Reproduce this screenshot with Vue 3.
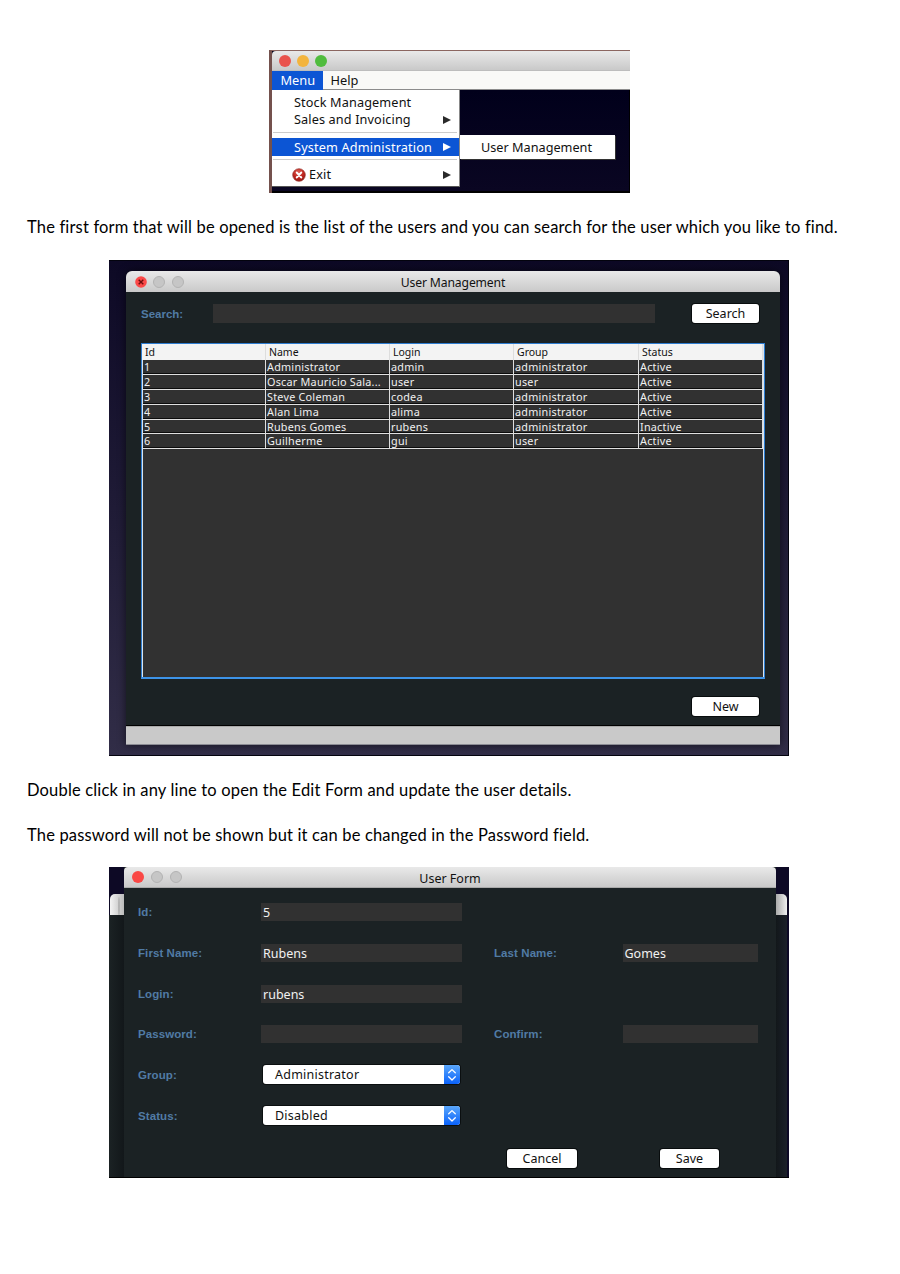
<script setup>
const columns = ['Id', 'Name', 'Login', 'Group', 'Status']
const users = [
  ['1', 'Administrator', 'admin', 'administrator', 'Active'],
  ['2', 'Oscar Mauricio Sala...', 'user', 'user', 'Active'],
  ['3', 'Steve Coleman', 'codea', 'administrator', 'Active'],
  ['4', 'Alan Lima', 'alima', 'administrator', 'Active'],
  ['5', 'Rubens Gomes', 'rubens', 'administrator', 'Inactive'],
  ['6', 'Guilherme', 'gui', 'user', 'Active'],
]
const fields = [
  { label: 'Id:', value: '5' },
  { label: 'First Name:', value: 'Rubens', label2: 'Last Name:', value2: 'Gomes' },
  { label: 'Login:', value: 'rubens' },
  { label: 'Password:', value: '', label2: 'Confirm:', value2: '' },
  { label: 'Group:', value: 'Administrator', select: true },
  { label: 'Status:', value: 'Disabled', select: true },
]
</script>

<template>
  <main class="page">
    <section class="menu-shot">
      <div class="titlebar small">
        <i class="light red"></i><i class="light amber"></i><i class="light green"></i>
      </div>
      <nav class="menubar"><span class="open">Menu</span><span class="help">Help</span></nav>
      <div class="desk">
        <div class="dropdown">
          <div class="item stock"><span>Stock Management</span></div>
          <div class="item sales"><span>Sales and Invoicing</span><svg class="arrow" viewBox="0 0 8 8"><path d="M0 0L8 4L0 8Z" /></svg></div>
          <hr />
          <div class="item active"><span>System Administration</span><svg class="arrow" viewBox="0 0 8 8"><path d="M0 0L8 4L0 8Z" /></svg></div>
          <hr class="second" />
          <div class="item exit">
            <svg class="exit-icon" viewBox="0 0 14 14">
              <defs>
                <radialGradient id="exitRed" cx=".45" cy=".3" r=".75">
                  <stop offset="0" stop-color="#e0675c" /><stop offset=".55" stop-color="#c0261f" /><stop offset="1" stop-color="#8c1410" />
                </radialGradient>
              </defs>
              <circle cx="7" cy="7" r="6.3" fill="url(#exitRed)" stroke="#9a3a33" stroke-width=".7" />
              <path d="M4.8 4.6L9.2 9.4M9.2 4.6L4.8 9.4" stroke="#fff" stroke-width="2.1" stroke-linecap="round" />
            </svg>
            <span>Exit</span><svg class="arrow" viewBox="0 0 8 8"><path d="M0 0L8 4L0 8Z" /></svg>
          </div>
        </div>
        <div class="submenu"><span>User Management</span></div>
      </div>
    </section>

    <p class="intro">The first form that will be opened is the list of the users and you can search for the user which you like to find.</p>

    <section class="list-shot">
      <div class="window">
        <div class="titlebar list-title">
          <svg class="close" viewBox="0 0 12 12"><circle cx="6" cy="6" r="5.8" fill="#fb4948" /><path d="M3.7 3.7L8.3 8.3M8.3 3.7L3.7 8.3" stroke="#6f0d0d" stroke-width="1.4" /></svg>
          <i class="light off"></i><i class="light off"></i>
          <h2>User Management</h2>
        </div>
        <div class="search-row">
          <label>Search:</label>
          <div class="input"></div>
          <button>Search</button>
        </div>
        <div class="table">
          <div class="tr head"><span v-for="c in columns" :key="c">{{ c }}</span></div>
          <div v-for="u in users" :key="u[0]" class="tr"><span v-for="(v, i) in u" :key="i"><b>{{ v }}</b></span></div>
        </div>
        <div class="new-row"><button>New</button></div>
        <div class="statusbar"></div>
      </div>
    </section>

    <p class="edit">Double click in any line to open the Edit Form and update the user details.</p>
    <p class="pass">The password will not be shown but it can be changed in the Password field.</p>

    <section class="form-shot">
      <div class="behind left"><div class="behind-bar"><i class="light off"></i></div><div class="behind-body"></div></div>
      <div class="form-window">
        <div class="titlebar form-title">
          <i class="light red"></i><i class="light off"></i><i class="light off"></i>
          <h2>User Form</h2>
        </div>
        <div class="form">
          <div v-for="f in fields" :key="f.label" class="form-row">
            <label>{{ f.label }}</label>
            <div v-if="f.select" class="select">
              <span>{{ f.value }}</span>
              <svg viewBox="0 0 16 19">
                <defs><linearGradient id="stepBlue" x1="0" y1="0" x2="0" y2="1"><stop offset="0" stop-color="#5aa7fb" /><stop offset="1" stop-color="#0a62fb" /></linearGradient></defs>
                <path d="M0 0H13Q16 0 16 3V16Q16 19 13 19H0Z" fill="url(#stepBlue)" />
                <path d="M4.7 7.8L8 4.6L11.3 7.8M4.7 11.8L8 15L11.3 11.8" fill="none" stroke="#fff" stroke-width="1.3" stroke-linecap="round" stroke-linejoin="round" />
              </svg>
            </div>
            <div v-else class="input">{{ f.value }}</div>
            <label v-if="f.label2" class="label2">{{ f.label2 }}</label>
            <div v-if="f.label2" class="input">{{ f.value2 }}</div>
          </div>
        </div>
        <div class="actions"><button class="cancel">Cancel</button><button class="save">Save</button></div>
      </div>
      <div class="behind right"><div class="behind-bar"></div><div class="behind-body"></div></div>
    </section>
  </main>
</template>

<style>
body { margin: 0; background: #fff; }
</style>

<style scoped>
* { box-sizing: border-box; }
.page { width: 900px; height: 1274px; padding-top: 50px; background: #fff; display: flex; flex-direction: column; font-family: "Noto Sans", "Open Sans", sans-serif; font-size: 12.5px; color: #111; }
p { margin: 0 0 0 27px; height: 24px; line-height: 24px; font-family: Lato, sans-serif; font-size: 16.5px; letter-spacing: .165px; color: #000; white-space: nowrap; flex: none; }
.intro { margin-top: 22px; }
.edit { margin-top: 22px; }
.pass { margin-top: 21px; }
h2 { position: absolute; inset: 0; margin: 0; text-align: center; font-weight: 400; font-size: 12.5px; line-height: 23px; }
.titlebar { position: relative; display: flex; align-items: center; background: linear-gradient(#e9e9e9, #c9c9c9); flex: none; }
.light { width: 12px; height: 12px; border-radius: 50%; flex: none; }
.red { background: #fa4845; }
.off { background: #c6c6c6; border: 1px solid #b3b3b3; }
.amber { background: #f3b43e; }
.green { background: #50bc3e; }
label { font: bold 11.5px "Liberation Sans", Arial, sans-serif; letter-spacing: .08px; color: #517ba4; }
button { height: 19px; padding: 0; border: 0; border-radius: 3px; background: #fff; box-shadow: 0 0 0 1px #080c0d; font: 12.5px/19px "Noto Sans", sans-serif; color: #111; flex: none; }

.menu-shot { width: 361px; height: 143px; margin-left: 269px; flex: none; border-left: 3px solid #74514d; border-top: 1px solid #8b6660; background: #03021a; display: flex; flex-direction: column; }
.titlebar.small { height: 20px; gap: 6px; padding-left: 7px; border-bottom: 1px solid #bdbdbd; border-radius: 4px 0 0 0; }
.small .red { background: #e9534d; }
.menubar { height: 19px; background: #f9f9f7; display: flex; font-size: 12.8px; line-height: 19px; border-bottom: 1px solid #8c8c8c; flex: none; }
.open { width: 51px; height: 19px; padding-left: 8.5px; background: #0c55d4; color: #fff; }
.help { margin-left: 7.5px; }
.desk { position: relative; flex: 1; border-right: 1px solid #000; border-bottom: 2px solid #000; background: linear-gradient(#01001b, #0a0622); }
.dropdown { width: 188px; height: 97px; background: #fff; padding-top: 4px; border-right: 1px solid #888; border-bottom: 1px solid #555; }
.item { display: flex; align-items: center; height: 17px; padding: 0 8px 0 22px; font-size: 12.7px; line-height: 17px; letter-spacing: .12px; white-space: nowrap; }
.arrow { width: 8px; height: 8px; margin-left: auto; fill: #2a2a2a; }
hr { margin: 4px 2px 5px 1px; border: 0; height: 1px; background: #ccc; }
.active { height: 18px; line-height: 18px; background: #0c55d4; color: #fff; letter-spacing: .16px; }
.active .arrow { fill: #fff; }
hr.second { margin: 3px 2px 6px 1px; }
.exit { padding-left: 19.5px; }
.exit-icon { width: 14px; height: 14px; margin-right: 3.5px; }
.submenu { position: absolute; left: 188px; top: 45px; width: 155px; height: 24px; padding-left: 21px; background: #fff; font-size: 12.7px; line-height: 24px; box-shadow: 1px 1px 0 #333; }

.list-shot { width: 680px; height: 496px; margin: 21px 0 0 109px; padding: 10px 9px 0 17px; background: linear-gradient(#0d0925, #312d47); border: 1px solid #03030e; border-left: 0; flex: none; }
.window { width: 654px; height: 474px; border-radius: 6px 6px 0 0; overflow: hidden; background: #1b2224; display: flex; flex-direction: column; box-shadow: 0 0 8px #0009; }
.list-title { height: 21px; gap: 6.5px; padding-left: 8.5px; }
.list-title h2 { font-size: 12.2px; letter-spacing: -.15px; }
.close { width: 12px; height: 12px; }
.search-row { display: flex; align-items: center; height: 19px; margin: 12px 0 0 15px; }
.search-row label { width: 72px; letter-spacing: 0; }
.input { height: 19px; background: #313131; color: #f2f2f2; }
.search-row .input { width: 442px; margin-right: 37px; }
.search-row button, .new-row button { width: 67px; }
.table { width: 624px; height: 336px; margin: 20px 0 0 15px; background: #313131; border: 1px solid #2d7cd0; border-bottom: 2px solid #3d93e8; flex: none; padding-right: 1px; box-shadow: inset 1px 0 0 #d8e4ee, inset -1px 0 0 #d8e4ee; color: #f0f0f0; font-size: 10.8px; }
.tr { display: grid; grid-template-columns: 124px 124px 124px 125px 124px; height: 14.9px; }
.tr:not(.head) { margin-left: 1px; border-bottom: 1px solid #e0e0e0; box-shadow: inset 0 -1px 0 #0c0c0c; grid-template-columns: 123px 124px 124px 125px 124px; letter-spacing: .24px; }
.tr span { padding-left: 1px; line-height: 14px; border-right: 1px solid #dedede; white-space: nowrap; }
.tr b { font-weight: 400; }
.head { height: 16px; background: #f3f3f3; color: #111; font-size: 10.5px; }
.tr.head span { padding-left: 3px; line-height: 16px; border-color: #ddd; }
.new-row { display: flex; justify-content: flex-end; margin: 18px 21px 0 0; }
.statusbar { height: 19px; margin-top: auto; background: #c9c9c9; border-top: 1px solid #aaa; border-bottom: 1px solid #8b8b93; box-shadow: 0 -1px 0 #000; }

.form-shot { display: flex; width: 680px; height: 311px; margin: 20px 0 0 109px; background: #0d0925; border-bottom: 1px solid #000; flex: none; }
.behind { padding-top: 27px; display: flex; flex-direction: column; overflow: hidden; flex: none; }
.left { width: 15px; }
.right { width: 13px; padding-right: 2px; }
.behind-bar { height: 21px; background: linear-gradient(90deg, #f4f4f4, #bbb); margin-left: 1px; border-radius: 5px 0 0 0; padding: 4px 0 0 8px; flex: none; overflow: hidden; }
.right .behind-bar { background: linear-gradient(90deg, #aaa, #f0f0f0); border-radius: 0 5px 0 0; margin-left: 0; }
.behind-body { flex: 1; background: linear-gradient(90deg, #1b2224, #12171a); }
.right .behind-body { background: linear-gradient(90deg, #12171a, #1b2029); }
.form-window { width: 652px; background: #1b2224; display: flex; flex-direction: column; }
.form-title { height: 21px; gap: 7px; padding-left: 8px; border-radius: 4px 4px 0 0; border-bottom: 1px solid #aaa; }
.form { padding: 4px 0 0 14px; }
.form-row { height: 40.7px; display: grid; grid-template-columns: 123px 233px 128.5px 135px; align-items: center; }
.form-row .input { height: 18px; line-height: 19px; padding-left: 2px; width: 201px; }
.form-row .label2 + .input { width: 135px; }
.select { display: flex; width: 197px; height: 19px; margin-left: 2px; padding-left: 12px; background: #fff; border-radius: 3px; line-height: 19px; letter-spacing: .24px; justify-content: space-between; box-shadow: 0 0 0 1px #0b0f10; }
.form-row:nth-child(5) { padding-bottom: 1px; }
.select svg { width: 16px; height: 19px; }
.actions { display: flex; margin: 13px 0 0 383px; }
.cancel { width: 70px; margin-right: 83px; }
.save { width: 59px; }
</style>
